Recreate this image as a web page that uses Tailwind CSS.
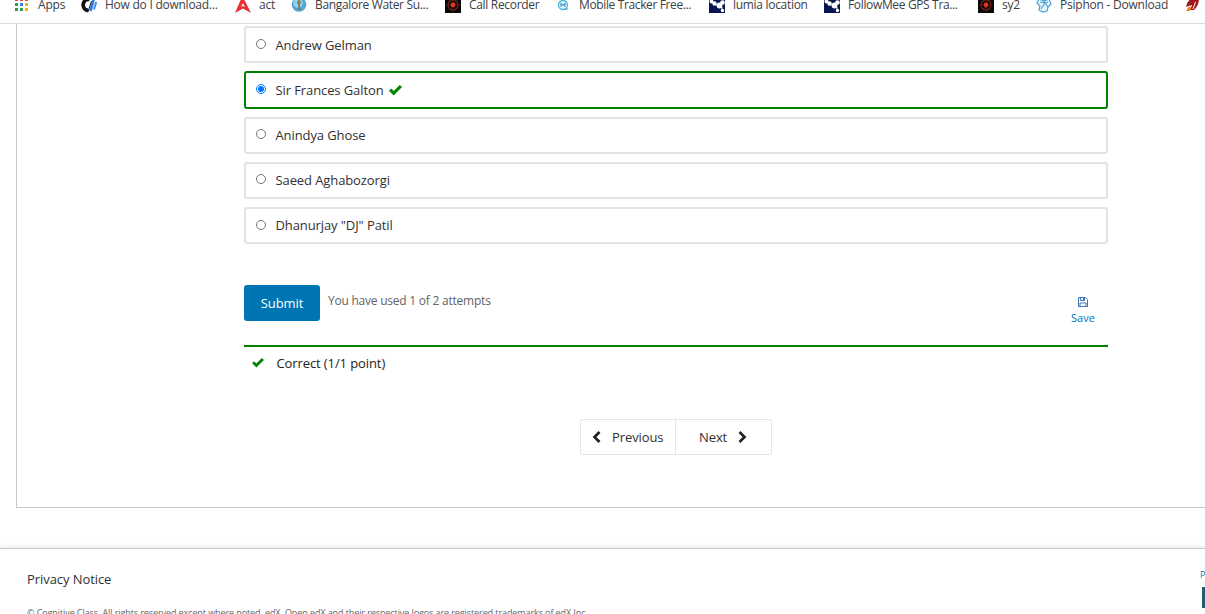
<!DOCTYPE html>
<html lang="en">
<head>
<meta charset="utf-8">
<title>Quiz</title>
<script src="https://cdn.jsdelivr.net/npm/@tailwindcss/browser@4"></script>
</head>
<body class="w-[1205px] h-[614px] overflow-hidden bg-white text-[13px] text-[#313131] font-['Open_Sans',sans-serif]">
<svg class="hidden">
  <symbol id="check" viewBox="0 0 13 11"><path d="M0 5.700 2.100 3.600 4.700 6.100 10.800 0 13 2.100 4.700 10.400Z"/></symbol>
  <symbol id="target" viewBox="0 0 16 16"><path d="M0 0h16v16H0z" fill="#0b0808"/><circle cx="8" cy="8" r="5" fill="none" stroke="#7a2018" stroke-width="1.200"/><path d="M8 1v14M1 8h14" stroke="#5c1812"/><circle cx="8" cy="8" r="2.400" fill="#e8321e"/></symbol>
  <symbol id="dots" viewBox="0 0 16 16"><path d="M0 0h16v16H0z" fill="#07164e"/><path d="m2 4 3 3 5 2 4-4M13 10v4" stroke="#fff" fill="none"/><g fill="#fff"><circle cx="2.500" cy="4.500" r="2"/><circle cx="5.500" cy="6.500" r="2.200"/><circle cx="10.500" cy="8.500" r="2.900"/><circle cx="13.500" cy="5.500" r="2.300"/><circle cx="13.500" cy="13.500" r="1.700"/></g></symbol>
</svg>
<header class="flex h-6 pl-[14px] overflow-hidden border-b border-[#d9dadc] text-xs leading-4 text-[#3c4043] whitespace-nowrap">
  <a class="flex gap-2 -mt-[3px] w-[67px] shrink-0"><svg class="size-4 shrink-0" viewBox="0 0 16 16"><path fill="#ea4335" d="M1 1h3v3H1zM6 1h3v3H6zM11 1h3v3h-3z"/><path fill="#2e9d55" d="M1 6h3v3H1z"/><path fill="#3480ea" d="M6 6h3v3H6z"/><path fill="#f5b400" d="M11 6h3v3h-3zM11 11h3v3h-3z"/><path fill="#2e9d55" d="M1 11h3v3H1zM6 11h3v3H6z"/></svg><span class="tracking-[-0.2px]">Apps</span></a>
  <a class="flex gap-2 -mt-[3px] w-[154px] shrink-0"><svg class="size-4 shrink-0" viewBox="0 0 16 16"><path d="M8.500 2.500A5.500 5.500 0 0 0 7 13.500" fill="none" stroke="#111" stroke-width="3.800"/><path d="M7 15 10.500 4" stroke="#111" stroke-width="1"/><path d="M9.500 14 12.500 3" stroke="#2878e8" stroke-width="2.600"/><path d="M13 12.500 15.200 5" stroke="#3f8cf2" stroke-width="2"/></svg><span class="tracking-[-0.25px]">How do I download...</span></a>
  <a class="flex gap-2 -mt-[3px] w-14 shrink-0"><svg class="size-4 shrink-0" viewBox="0 0 16 16"><path fill="#e92e35" d="M8 0 16 16 8 11.500 0 16 6.500 1Z"/><path fill="#fff" d="m8 6 2 4-2-1-2 1Z"/></svg><span class="tracking-[-0.2px]">act</span></a>
  <a class="flex gap-2 -mt-[3px] w-[154px] shrink-0"><svg class="size-4 shrink-0" viewBox="0 0 16 16"><circle cx="8" cy="7.500" r="7.300" fill="#4fa6dc"/><circle cx="7" cy="6" r="4.800" fill="#94cff0"/><path d="M8 2v11M6 5.500h4M6.500 12h3" stroke="#8a7b4a" stroke-width="1.800"/></svg><span class="tracking-[-0.33px]">Bangalore Water Su...</span></a>
  <a class="flex gap-2 -mt-[3px] w-[110px] shrink-0"><svg class="size-4 shrink-0"><use href="#target"/></svg><span class="tracking-[-0.32px]">Call Recorder</span></a>
  <a class="flex gap-2 -mt-[3px] w-[154px] shrink-0"><svg class="size-4 shrink-0" viewBox="0 0 16 16"><circle cx="8" cy="8" r="4.500" fill="#effaff" stroke="#45b5d9" stroke-width="1.300"/><path d="M6 10V6.500l2 2 2-2V10M10 12h3" fill="none" stroke="#3a9fd0" stroke-width="1.200"/></svg><span class="tracking-[-0.37px]">Mobile Tracker Free...</span></a>
  <a class="flex gap-2 -mt-[3px] w-[115px] shrink-0"><svg class="size-4 shrink-0"><use href="#dots"/></svg><span class="tracking-[-0.3px]">lumia location</span></a>
  <a class="flex gap-2 -mt-[3px] w-[154px] shrink-0"><svg class="size-4 shrink-0"><use href="#dots"/></svg><span class="tracking-[-0.35px]">FollowMee GPS Tra...</span></a>
  <a class="flex gap-2 -mt-[3px] w-[58px] shrink-0"><svg class="size-4 shrink-0"><use href="#target"/></svg><span class="tracking-[-0.2px]">sy2</span></a>
  <a class="flex gap-2 -mt-[3px] w-[148px] shrink-0"><svg class="size-4 shrink-0" viewBox="0 0 16 16"><path d="m3 2 5 2 5-2 2 5-3 3-1 4-4 1-4-2 1-4-3-3Z" fill="#e7f5fd" stroke="#4ea3d6" stroke-width="1.200"/><path d="m4 5 5 1 3 4M12 5l-3 1-4 6M9 6l-1-2" fill="none" stroke="#4ea3d6" stroke-width="1.200"/></svg><span class="tracking-[-0.23px]">Psiphon - Download</span></a>
  <a class="-mt-[3px] w-[21px] shrink-0 pl-px"><svg class="size-4" viewBox="0 0 16 16"><path fill="#a3181b" d="M6 2Q11 0 14 2 14 8 9 13H5L7 8 1 10Q2 4 6 2Z"/><path fill="#ef8022" d="M3.500 10h3L5 14H1Z"/><path d="M10.500 5 8 12" stroke="#fff" stroke-width="1"/></svg></a>
</header>

<main class="ml-4 h-[484px] border-l border-b border-[#c8c8c8] pl-[227px] pt-[2px]">
  <div class="w-[864px]">
    <div class="flex flex-col gap-2 tracking-[-0.1px]">
      <label class="flex items-center h-[37px] border-2 border-[#e3e3e3] rounded-[3px] pl-[10px]"><span class="size-[10px] mb-[2px] mr-[9.500px] rounded-full border border-[#767676]"></span><span class="pt-[2px]">Andrew Gelman</span></label>
      <label class="flex items-center h-[38px] border-2 border-[#008100] rounded-[3px] pl-[10px]"><span class="flex items-center justify-center size-[10px] mb-[2px] mr-[9.500px] rounded-full border border-[#0075ff]"><span class="size-[6px] rounded-full bg-[#0075ff]"></span></span><span class="pt-px">Sir Frances Galton</span><svg class="w-[13px] h-[11px] ml-[5px] fill-[#008100]"><use href="#check"/></svg></label>
      <label class="flex items-center h-[37px] border-2 border-[#e3e3e3] rounded-[3px] pl-[10px]"><span class="size-[10px] mb-[3px] mr-[9.500px] rounded-full border border-[#767676]"></span><span>Anindya Ghose</span></label>
      <label class="flex items-center h-[37px] border-2 border-[#e3e3e3] rounded-[3px] pl-[10px]"><span class="size-[10px] mb-[3px] mr-[9.500px] rounded-full border border-[#767676]"></span><span>Saeed Aghabozorgi</span></label>
      <label class="flex items-center h-[37px] border-2 border-[#e3e3e3] rounded-[3px] pl-[10px]"><span class="size-[10px] mb-px mr-[9.500px] rounded-full border border-[#767676]"></span><span>Dhanurjay "DJ" Patil</span></label>
    </div>
    <div class="flex mt-[41px] h-[60px]">
      <button class="w-[76px] h-9 pt-[2px] rounded-[3px] bg-[#0075b4] text-white font-medium tracking-[-0.1px]"><span>Submit</span></button>
      <span class="ml-2 mt-2 leading-4 text-xs tracking-[-0.23px] text-[#646464]">You have used 1 of 2 attempts</span>
      <div class="flex flex-col items-center w-[50px] ml-auto pt-3 text-[11px] leading-4 text-[#0075b4]">
        <svg class="size-[10px] mb-[3px]" viewBox="0 0 10 10" fill="none" stroke="#3d79b5"><path d="M.5.500h7l2 2v7h-9ZM2.500.500v3h4v-3M2 9.500v-3.500h6v3.500M5.500 1v2"/></svg><span>Save</span></div>
    </div>
    <div class="flex items-center h-[37px] border-t-2 border-[#008100] pl-2 text-[#222] tracking-[-0.1px]"><svg class="w-3 h-[10px] mb-[3px] mr-[12.500px] fill-[#008100]"><use href="#check"/></svg><span class="pb-[2px]">Correct (1/1 point)</span></div>
    <nav class="flex mx-auto mt-[37px] w-48 h-9 border border-[#e5e5e5] rounded-[2px] tracking-[-0.1px]">
      <a class="flex items-center w-[95px] border-r border-[#e5e5e5] pl-[11px]"><svg class="w-[9px] h-3 mr-[11px]" viewBox="0 0 9 12" fill="none" stroke="#222" stroke-width="2.700"><path d="M7.500 1 2.500 6l5 5"/></svg><span class="pt-px">Previous</span></a>
      <a class="flex items-center pl-[23px]"><span class="pt-px">Next</span><svg class="w-[9px] h-3 ml-[10.500px]" viewBox="0 0 9 12" fill="none" stroke="#222" stroke-width="2.700"><path d="m1.500 1 5 5-5 5"/></svg></a>
    </nav>
  </div>
</main>

<footer class="flex justify-between mt-10 h-[66px] border-t border-[#c8c8c8] pl-[27px] shadow-[0_-1px_4px_rgba(0,0,0,0.1)]">
  <div class="pt-[21px]">
    <div class="leading-[18px] tracking-[-0.07px]"><span>Privacy Notice</span></div>
    <div class="mt-[17px] text-[9px] leading-4 tracking-[-0.09px] text-[#646464] whitespace-nowrap"><span>© Cognitive Class. All rights reserved except where noted. edX, Open edX and their respective logos are registered trademarks of edX Inc.</span></div>
  </div>
  <div class="w-[6px] overflow-hidden pt-5 text-[9px] leading-3 text-[#0075b4]"><span class="ml-px">P</span><div class="mt-[6px] ml-[3px] h-[21px] w-10 bg-[#235c75]"></div></div>
</footer>
</body>
</html>
